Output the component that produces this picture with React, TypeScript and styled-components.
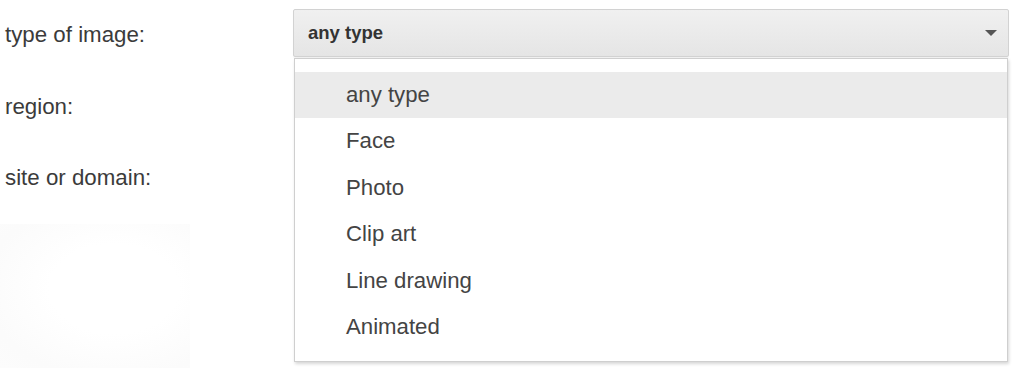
import React from "react";
import styled, { createGlobalStyle } from "styled-components";

const Global = createGlobalStyle`
  html, body { margin: 0; padding: 0; background: #ffffff; }
  body { font-family: "Liberation Sans", Arial, sans-serif; width: 1020px; height: 368px; overflow: hidden; }
`;

const Page = styled.div`
  width: 1020px;
  height: 368px;
  padding-top: 9px;
  box-sizing: border-box;
  display: flex;
  flex-direction: column;
  gap: 25px;
  position: relative;
`;

const Row = styled.div`
  display: flex;
  align-items: center;
  height: 48px;
`;

const Label = styled.div`
  width: 293px;
  flex: none;
  box-sizing: border-box;
  padding-left: 5px;
  padding-top: 2px;
  font-size: 22.3px;
  line-height: 25px;
  color: #3b3b3b;
`;

const Control = styled.div`
  width: 716px;
  height: 48px;
  position: relative;
`;

const SelectBox = styled.div`
  box-sizing: border-box;
  height: 48px;
  border: 1px solid #d2d2d2;
  border-radius: 2px;
  background: linear-gradient(#f0f0f0, #e5e5e5);
  box-shadow: 0 1px 1px rgba(0, 0, 0, 0.06);
  display: flex;
  align-items: center;
  justify-content: space-between;
  padding: 0 11px 0 14px;
`;

const SelectText = styled.span`
  font-size: 18.5px;
  font-weight: bold;
  line-height: 46px;
  color: #333333;
`;

const Menu = styled.ul`
  position: absolute;
  top: 49px;
  left: 1px;
  right: 1px;
  margin: 0;
  padding: 13px 0 11px;
  list-style: none;
  background: #ffffff;
  border: 1px solid #cfcfcf;
  box-shadow: 1px 2px 3px rgba(0, 0, 0, 0.16);
  z-index: 2;
`;

const Item = styled.li<{ $active?: boolean }>`
  height: 46.4px;
  line-height: 46.4px;
  padding-left: 51px;
  font-size: 22.2px;
  color: #444444;
  background: ${(p) => (p.$active ? "#ebebeb" : "transparent")};
`;

const Ghost = styled.div`
  width: 190px;
  height: 150px;
  margin-top: 0;
  background: radial-gradient(ellipse at 60% 45%, #ffffff 40%, #fbfbfb 80%, #fcfcfc 100%);
`;

const Arrow = () => (
  <svg width="12" height="6" viewBox="0 0 12 6">
    <path d="M0 0 L12 0 L6 6 Z" fill="#555555" />
  </svg>
);

const options = ["any type", "Face", "Photo", "Clip art", "Line drawing", "Animated"];

export default function App() {
  return (
    <>
      <Global />
      <Page>
        <Row>
          <Label>type of image:</Label>
          <Control>
            <SelectBox>
              <SelectText>any type</SelectText>
              <Arrow />
            </SelectBox>
            <Menu>
              {options.map((o, i) => (
                <Item key={o} $active={i === 0}>
                  {o}
                </Item>
              ))}
            </Menu>
          </Control>
        </Row>
        <Row>
          <Label>region:</Label>
        </Row>
        <Row>
          <Label>site or domain:</Label>
        </Row>
        <Ghost />
      </Page>
    </>
  );
}
